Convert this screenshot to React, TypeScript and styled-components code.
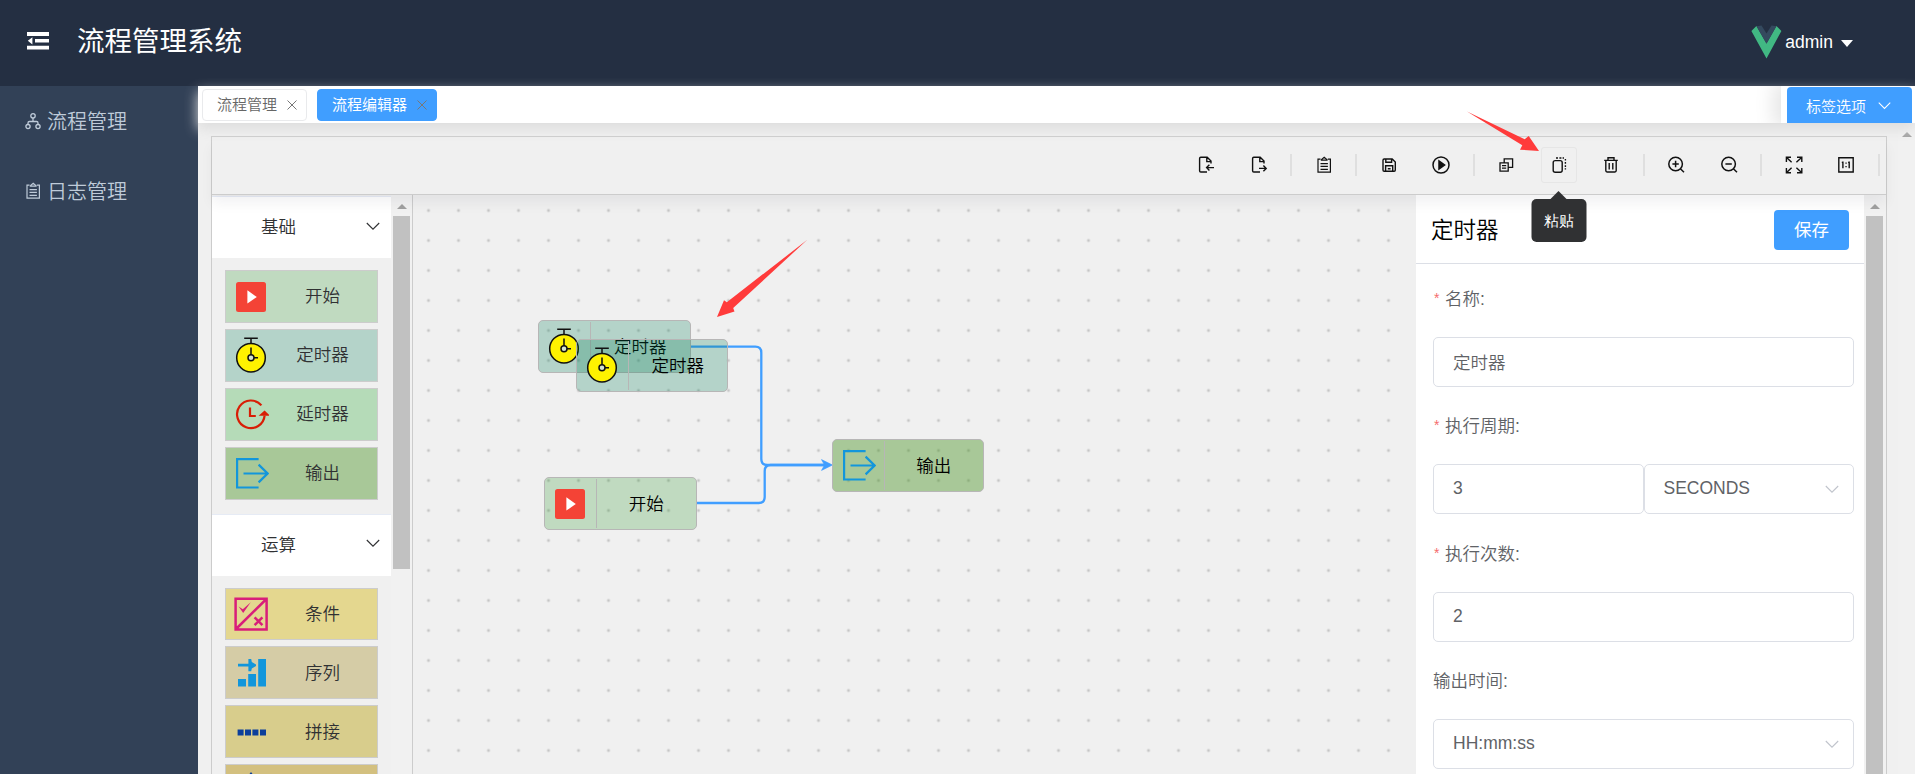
import React from "react";
import styled, { createGlobalStyle } from "styled-components";

const GlobalStyle = createGlobalStyle`
  *, *::before, *::after { box-sizing: border-box; }
  body {
    margin: 0;
    overflow: hidden;
    background: #f0f0f0;
    font-family: "Liberation Sans", "Noto Sans CJK SC", sans-serif;
    font-size: 17.5px;
    font-weight: 350;
  }
`;

const Page = styled.div`
  height: 774px;
  display: flex;
  flex-direction: column;
  overflow: hidden;
`;

/* ---------- header ---------- */
const Header = styled.header`
  flex: none;
  height: 86px;
  display: flex;
  align-items: center;
  background: #242f42;
  color: #fff;
  padding: 0 62px 2px 26px;
`;

const MenuToggle = styled.svg`
  width: 24px;
  height: 20px;
  margin: 0 27px 2px 0;
`;

const SystemTitle = styled.h1`
  margin: 0;
  flex: 1;
  font-size: 27.5px;
  line-height: 40px;
  font-weight: 400;
`;

const UserMenu = styled.div`
  display: flex;
  align-items: center;
  font-weight: 400;
  line-height: 24px;
`;

const Logo = styled.svg`
  width: 31px;
  height: 34px;
  margin-right: 3px;
`;

const Caret = styled.i`
  margin: 2px 0 0 8px;
  border: 6px solid transparent;
  border-top: 7px solid #fff;
  border-bottom: 0;
`;

/* ---------- frame ---------- */
const Body = styled.div`
  flex: 1;
  min-height: 0;
  display: flex;
`;

const SideNav = styled.nav`
  width: 198px;
  flex: none;
  background: #324157;
`;

const NavItem = styled.a`
  height: 70px;
  display: flex;
  align-items: center;
  padding: 0 0 2px 23px;
  gap: 4px;
  color: #bfcbd9;
  font-size: 20px;

  svg { width: 20px; height: 20px; margin-top: 2px; }
`;

const Main = styled.main`
  flex: 1;
  min-width: 0;
  display: flex;
  flex-direction: column;
  background: #f0f0f0;
`;

const TagsBar = styled.div`
  position: relative;
  z-index: 1;
  flex: none;
  height: 37px;
  display: flex;
  align-items: center;
  background: #fff;
  padding-left: 4px;
  box-shadow: 0 6px 12.5px #ddd;
`;

const Tag = styled.div<{ $active?: boolean }>`
  height: 32px;
  margin-right: 10px;
  padding: 0 8px 0 14px;
  display: flex;
  align-items: center;
  gap: 9px;
  border: 1px solid ${(p) => (p.$active ? "#409eff" : "#e9eaec")};
  border-radius: 4px;
  background: ${(p) => (p.$active ? "#409eff" : "#fff")};
  color: ${(p) => (p.$active ? "#fff" : "#666")};
  font-size: 15px;
  font-weight: ${(p) => (p.$active ? 400 : 350)};
  line-height: 30px;

  svg { width: 12px; height: 12px; }
`;

const TagOptions = styled.div`
  height: 37px;
  margin-left: auto;
  padding: 1px 3px 0 6px;
  background: #fff;
  box-shadow: -4px 0 19px 4px rgba(0, 0, 0, 0.1);
  clip-path: inset(0 0 0 -30px);
`;

const TagOptionsButton = styled.button`
  width: 125px;
  height: 36px;
  border: 0;
  border-radius: 4px 4px 0 0;
  background: #409eff;
  color: #fff;
  font: inherit;
  font-size: 15px;
  display: flex;
  align-items: center;
  gap: 12px;
  padding: 1px 0 0 19px;
`;

const Scroller = styled.div`
  flex: 1;
  min-height: 0;
  display: flex;
  justify-content: space-between;
  padding-left: 13px;
`;

const Workbench = styled.section`
  width: 1676px;
  margin-top: 13px;
  display: flex;
  flex-direction: column;
  border: 1px solid #ccc;
  border-bottom: 0;
`;

/* ---------- toolbar ---------- */
const Toolbar = styled.div`
  position: relative;
  z-index: 2;
  flex: none;
  height: 58px;
  display: flex;
  align-items: center;
  justify-content: flex-end;
  padding: 0 1px 1px 0;
  border-bottom: 1px solid #ccc;
  box-shadow: 0 9px 12px rgba(0, 21, 41, 0.05);
`;

const ToolButton = styled.button<{ $hover?: boolean }>`
  position: relative;
  width: 36.5px;
  height: 36.5px;
  margin: 0 8px;
  padding: 0;
  display: grid;
  place-items: center;
  background: none;
  border: 1px solid ${(p) => (p.$hover ? "#e6e6e6" : "transparent")};
  border-radius: 3px;

  svg { width: 20px; height: 20px; }
`;

const Separator = styled.i`
  width: 2px;
  height: 22px;
  margin: 0 5.25px;
  background: #dfdfdf;
`;

const Tooltip = styled.span`
  position: absolute;
  top: 51px;
  left: 50%;
  width: 55px;
  height: 43px;
  transform: translateX(-50%);
  border-radius: 5px;
  background: #303133;
  color: #fff;
  font-size: 15px;
  font-weight: 400;
  line-height: 43px;
  text-align: center;

  &::before {
    content: "";
    position: absolute;
    top: -8px;
    left: 19.5px;
    border: 8px solid transparent;
    border-top: 0;
    border-bottom-color: #303133;
  }
`;

/* ---------- palette ---------- */
const Columns = styled.div`
  flex: 1;
  min-height: 0;
  display: flex;
`;

const PaletteColumn = styled.aside`
  width: 201px;
  flex: none;
  display: flex;
  border-right: 1px solid #ccc;
  overflow: hidden;
`;

const PaletteGroups = styled.div`
  width: 179px;
  flex: none;
  padding-top: 1px;
`;

const GroupHead = styled.div`
  height: 62px;
  display: flex;
  align-items: center;
  justify-content: space-between;
  padding: 0 11px 4px 49px;
  border-top: 1px solid #e6ebf5;
  background: #fff;
  color: #303133;
`;

const GroupBody = styled.div`
  padding: 12px 13px 14px;
  display: flex;
  flex-direction: column;
  gap: 6px;
`;

const Card = styled.div<{ $fill: string }>`
  width: 153px;
  height: 52.9px;
  display: flex;
  align-items: center;
  border: 1px solid #ccc;
  background: ${(p) => p.$fill};
  color: #303133;
`;

const IconCell = styled.span`
  width: 42px;
  flex: none;
  padding-left: 7px;
  display: flex;

  svg { width: 36px; height: 40px; flex: none; }
`;

const CardLabel = styled.span`
  flex: 1;
  text-align: center;
  line-height: 26px;
`;

/* ---------- scrollbars ---------- */
const ScrollTrack = styled.div<{ $inset?: number }>`
  width: ${(p) => 21 + (p.$inset ?? 0)}px;
  padding-right: ${(p) => p.$inset ?? 0}px;
  flex: none;
  background: #f1f1f1;
  display: flex;
  flex-direction: column;
  align-items: center;
`;

const ScrollArrow = styled.i`
  flex: none;
  margin: 9px 0 7px;
  border: 5px solid transparent;
  border-top: 0;
  border-bottom-color: #a0a0a0;
`;

const ScrollThumb = styled.i<{ $height: string }>`
  width: 17px;
  height: ${(p) => p.$height};
  background: #c1c1c1;
`;

/* ---------- canvas ---------- */
const Canvas = styled.div`
  position: relative;
  flex: 1;
  overflow: hidden;
  background: radial-gradient(circle, #c6c6c6 1px, transparent 1.9px) 0.5px 0.5px / 30px 30px;
`;

const Edges = styled.svg`
  position: absolute;
  inset: 0;
  width: 1003px;
  height: 579px;
`;

const Node = styled.div<{ $x: number; $y: number; $w: number; $fill: string }>`
  position: absolute;
  left: ${(p) => p.$x}px;
  top: ${(p) => p.$y}px;
  width: ${(p) => p.$w}px;
  height: 52.5px;
  display: flex;
  align-items: center;
  border: 1px solid #b7b6b6;
  border-radius: 5px;
  background: ${(p) => p.$fill};
  color: #000;
`;

const NodeIcon = styled.span`
  width: 52px;
  height: 49px;
  flex: none;
  padding-left: 7px;
  display: flex;
  align-items: center;
  border-right: 1px solid #b7b6b6;

  svg { width: 36px; height: 40px; }
`;

const NodeLabel = styled(CardLabel)`
  padding-top: 2px;
`;

/* ---------- property panel ---------- */
const Properties = styled.aside`
  width: 448px;
  flex: none;
  background: #fff;
`;

const PropHead = styled.div`
  height: 69px;
  display: flex;
  align-items: center;
  justify-content: space-between;
  padding: 1px 15px 0 15px;
  border-bottom: 1px solid #dcdfe6;
`;

const PropTitle = styled.h2`
  margin: -3px 0 0;
  font-size: 22.5px;
  font-weight: 350;
  color: #000;
`;

const SaveButton = styled.button`
  width: 75px;
  height: 40px;
  border: 0;
  border-radius: 4px;
  background: #409eff;
  color: #fff;
  font: inherit;
  font-weight: 400;
  padding: 0 0 2px;
`;

const Form = styled.div`
  padding: 10px 10px 0 17px;
`;

const Field = styled.div`
  height: 127.4px;
`;

const FieldLabel = styled.div<{ $required?: boolean }>`
  height: 50px;
  line-height: 50px;
  margin-bottom: 13px;
  color: #606266;

  &::before {
    content: ${(p) => (p.$required ? '"*"' : "none")};
    display: inline-block;
    width: 12px;
    padding-left: 1px;
    font-size: 14px;
    line-height: 20px;
    vertical-align: 2px;
    color: #f56c6c;
  }
`;

const FieldRow = styled.div`
  display: flex;
`;

const InputBox = styled.div`
  flex: 1 1 0;
  height: 50px;
  display: flex;
  align-items: center;
  justify-content: space-between;
  padding: 0 14px 1px 19px;
  border: 1px solid #dcdfe6;
  border-radius: 5px;
  color: #606266;
`;

const Annotations = styled.svg`
  position: absolute;
  left: 0;
  top: 0;
  width: 1915px;
  height: 774px;
  z-index: 5;
  pointer-events: none;
`;

/* ---------- icons ---------- */
const Chevron = ({ color, size = 14 }: { color: string; size?: number }) => (
  <svg width={size} height={size} viewBox="0 0 14 14" fill="none" stroke={color} strokeWidth="1.1">
    <path d="M.8 4 7 10.2 13.2 4" />
  </svg>
);

const Cross = () => (
  <svg viewBox="0 0 12 12" fill="none" stroke="#777" strokeWidth="1">
    <path d="M1.5 1.5l9 9M10.5 1.5l-9 9" />
  </svg>
);

const Line = ({ children, w = 1.4, color = "#111" }: { children: React.ReactNode; w?: number; color?: string }) => (
  <svg viewBox="0 0 20 20" fill="none" stroke={color} strokeWidth={w}>
    {children}
  </svg>
);

const FlowIcon = () => (
  <Line color="#bfcbd9" w={1.3}>
    <circle cx="10" cy="4.8" r="2.2" />
    <circle cx="5" cy="15.6" r="2.1" />
    <circle cx="15" cy="15.6" r="2.1" />
    <path d="M10 7v3.5M5 13.5v-1.6q0-1.4 1.4-1.4h7.2q1.4 0 1.4 1.4v1.6" />
  </Line>
);

const ClipboardIcon = ({ color = "#111" }: { color?: string }) => (
  <Line color={color} w={1.2}>
    <path d="M6.5 4.2H4v13h12.4v-13h-2.6M6.8 5.2h6.8M7.4 4.6 10.2 2.2 13 4.6M6.5 8.6h7.4M6.5 11.4h7.4M6.5 14.3h7.4" />
  </Line>
);

const docOutline = "M11 17H4.8Q3.6 17 3.6 15.8V3.5Q3.6 2.3 4.8 2.3H11.2L15 6.1V8.5M10.8 2.5V6.6H15";

const tools: Record<string, React.ReactNode> = {
  import: <Line><path d={`${docOutline}M18 12.6H10.8M13.4 9.8 10.6 12.6l2.8 2.8`} /></Line>,
  export: <Line><path d={`${docOutline}M10 13.4H17M14.4 10.6 17.2 13.4l-2.8 2.8`} /></Line>,
  log: <ClipboardIcon />,
  save: (
    <Line>
      <path d="M4 5.2Q4 4 5.2 4H13.2L16.3 7V15Q16.3 16.2 15.1 16.2H5.2Q4 16.2 4 15ZM6.8 4V7.2H12.6V4M6.6 16V10.8H13.7V16M8.8 13.8H11.6" />
    </Line>
  ),
  run: (
    <Line w={1.5}>
      <circle cx="10" cy="10" r="8" />
      <path d="M8 6v8l5.6-4z" fill="#111" />
    </Line>
  ),
  copy: (
    <Line w={1.3}>
      <path d="M4 7.8H12.2V16.2H4ZM8.2 7.6V3.8H16.6V12.4H12.4M6 10.6H10.2M6 13.2H10.2" />
    </Line>
  ),
  paste: (
    <Line>
      <rect x="4.2" y="5.6" width="9" height="11.6" rx="2" />
      <path d="M7 3h2M10.4 3h2M13.6 3h1.4M16.4 4v1.6M16.4 7v1.8M16.4 10.2V12M16.4 13.2v1.4" />
    </Line>
  ),
  remove: (
    <Line>
      <path d="M3.2 5.4H16.8M7 5V2.8H13V5M4.8 5.6V15.6Q4.8 17 6 17H14Q15.2 17 15.2 15.6V5.6M8.2 8V14.4M11.8 8V14.4" />
    </Line>
  ),
  zoomIn: (
    <Line w={1.5}>
      <circle cx="9.6" cy="9" r="6.8" />
      <path d="M14.4 13.8 18 17.2M9.6 5.8v6.4M6.4 9h6.4" />
    </Line>
  ),
  zoomOut: (
    <Line w={1.5}>
      <circle cx="9.6" cy="9" r="6.8" />
      <path d="M14.4 13.8 18 17.2M6.4 9h6.4" />
    </Line>
  ),
  fit: (
    <Line>
      <path d="M2.4 7V2.2H7M2.6 2.4 7.6 7.2M13 2.2H17.8V7M17.6 2.4 12.4 7.2M2.4 13V17.8H7M2.6 17.6 7.6 12.8M13 17.8H17.8V13M17.6 17.6 12.4 12.8" />
    </Line>
  ),
  actual: (
    <Line>
      <path d="M2.8 2.8H17.2V17H2.8ZM6.9 6.6V13.2M13.2 6.6V13.2M5.8 7.4H7M12.1 7.4H13.2" />
      <path d="M9.4 8.1h1.3M9.4 11.6h1.3" />
    </Line>
  ),
};

const shapes: Record<string, React.ReactNode> = {
  start: (
    <svg viewBox="0 0 36 40">
      <rect x="3" y="6" width="30" height="30" rx="2.5" fill="#f44336" />
      <path d="M14.4 14.2V27.6L23.8 21z" fill="#fff" />
    </svg>
  ),
  timer: (
    <svg viewBox="0 0 36 40" fill="none" stroke="#111" strokeWidth="1.5">
      <path d="M11.2 3.3H24.8M18 3.5V8" />
      <circle cx="18" cy="22.7" r="14.3" fill="#fff200" />
      <path d="M18 12.5V20M21 22.7H25" />
      <circle cx="18" cy="22.7" r="3" fill="#d5e3d0" />
    </svg>
  ),
  delay: (
    <svg viewBox="0 0 36 40" fill="none" stroke="#d81e06" strokeWidth="2.2">
      <path d="M28.4 11.4A13.8 13.8 0 1 0 31.6 21.6" />
      <path d="M17 13.4V22H22.8" />
      <path d="M25.6 21.8 31.6 16.6 37 21.8z" fill="#d81e06" stroke="none" />
    </svg>
  ),
  output: (
    <svg viewBox="0 0 36 40" fill="none" stroke="#1296db" strokeWidth="2.2">
      <path d="M25.6 6.1H4.1V34.5H25.6M10.5 20.5H34.4M25.6 11.6 34.6 20.5 25.6 29.4" />
    </svg>
  ),
  condition: (
    <svg viewBox="0 0 36 40" fill="none" stroke="#d81e7a" strokeWidth="2.5">
      <path d="M2.6 4.8H33.6V35.4H2.6ZM3 35 33.4 5M21.6 23.4 29.4 31.2M29.4 23.4 21.6 31.2" />
      <path d="M5.6 12.6 9.8 15.2 17.8 8.2 10.2 19z" fill="#d81e7a" stroke="none" />
    </svg>
  ),
  sequence: (
    <svg viewBox="0 0 36 40" fill="#1296db">
      <path d="M5 26h8v7.6H5zM15.2 21h7.8v12.6h-7.8zM25.2 6h7.8v27.6h-7.8zM5 10.8h10.4V6l2.8 0 .6 3 4.2 2.6v1.4l-4.2 2.6-.6 2.6h-2.8v-4.6H5z" />
    </svg>
  ),
  concat: (
    <svg viewBox="0 0 36 40" fill="#0b3f9b">
      <path d="M4.6 17.4h6v6h-6zM12 17.4h6v6h-6zM19.4 17.4h6v6h-6zM27 17.4h6v6h-6z" />
    </svg>
  ),
  split: (
    <svg viewBox="0 0 36 40" fill="#0b3f9b">
      <path d="M18 1 21 5v28h-6V5z" />
    </svg>
  ),
};

type Item = { kind: string; label: string; fill: string };

const basics: Item[] = [
  { kind: "start", label: "开始", fill: "#c0dac0" },
  { kind: "timer", label: "定时器", fill: "#b4d3c9" },
  { kind: "delay", label: "延时器", fill: "#b5dbb8" },
  { kind: "output", label: "输出", fill: "#a8c898" },
];

const operations: Item[] = [
  { kind: "condition", label: "条件", fill: "#e4d78f" },
  { kind: "sequence", label: "序列", fill: "#d5cca6" },
  { kind: "concat", label: "拼接", fill: "#d8cd8c" },
  { kind: "split", label: "", fill: "#d3c07f" },
];

const toolOrder = [
  "import", "export", "|", "log", "|", "save", "run", "|", "copy", "paste",
  "remove", "|", "zoomIn", "zoomOut", "|", "fit", "actual", "|",
];

const nodes = [
  { kind: "timer", label: "定时器", x: 125, y: 125, w: 152.5, fill: "rgba(0,124,84,.25)" },
  { kind: "start", label: "开始", x: 131, y: 282, w: 152.5, fill: "rgba(0,128,0,.2)" },
  { kind: "output", label: "输出", x: 419, y: 244, w: 151.5, fill: "rgba(60,140,20,.4)" },
  { kind: "timer", label: "定时器", x: 163, y: 144, w: 151.5, fill: "rgba(0,124,84,.25)" },
];

function PaletteGroup({ title, items }: { title: string; items: Item[] }) {
  return (
    <>
      <GroupHead>
        {title}
        <Chevron color="#303133" />
      </GroupHead>
      <GroupBody>
        {items.map((item) => (
          <Card key={item.kind} $fill={item.fill}>
            <IconCell>{shapes[item.kind]}</IconCell>
            <CardLabel>{item.label}</CardLabel>
          </Card>
        ))}
      </GroupBody>
    </>
  );
}

export default function App() {
  return (
    <Page>
      <GlobalStyle />
      <Header>
        <MenuToggle viewBox="0 0 24 20" fill="#fff">
          <path d="M1 1h22v4H1zM9 8h14v3.6H9zM1 14.8h22v3.8H1zM1.8 9.8 6.4 6.2v7.2z" />
        </MenuToggle>
        <SystemTitle>流程管理系统</SystemTitle>
        <UserMenu>
          <Logo viewBox="0 0 31 34">
            <path d="M.4 6 5.4 1 15.5 18.6 25.4 1l5 5L15.5 33.5z" fill="#41b883" />
            <path d="M5.6 1.2 10.5.4l5 8.2 5-8.2 4.9.8-9.9 17.6z" fill="#34495e" />
          </Logo>
          admin
          <Caret />
        </UserMenu>
      </Header>
      <Body>
        <SideNav>
          <NavItem><FlowIcon />流程管理</NavItem>
          <NavItem><ClipboardIcon color="#bfcbd9" />日志管理</NavItem>
        </SideNav>
        <Main>
          <TagsBar>
            <Tag>流程管理<Cross /></Tag>
            <Tag $active>流程编辑器<Cross /></Tag>
            <TagOptions>
              <TagOptionsButton>
                标签选项
                <Chevron color="#fff" size={13} />
              </TagOptionsButton>
            </TagOptions>
          </TagsBar>
          <Scroller>
            <Workbench>
              <Toolbar>
                {toolOrder.map((name, i) =>
                  name === "|" ? (
                    <Separator key={i} />
                  ) : (
                    <ToolButton key={name} $hover={name === "paste"}>
                      {tools[name]}
                      {name === "paste" && <Tooltip>粘贴</Tooltip>}
                    </ToolButton>
                  )
                )}
              </Toolbar>
              <Columns>
                <PaletteColumn>
                  <PaletteGroups>
                    <PaletteGroup title="基础" items={basics} />
                    <PaletteGroup title="运算" items={operations} />
                  </PaletteGroups>
                  <ScrollTrack>
                    <ScrollArrow />
                    <ScrollThumb $height="353px" />
                  </ScrollTrack>
                </PaletteColumn>
                <Canvas>
                  <Edges viewBox="0 0 1003 579" fill="none" stroke="#409eff" strokeWidth="2.3">
                    <path d="M278 151.7H342.3Q348.3 151.7 348.3 157.7V264Q348.3 270 354.3 270H412" />
                    <path d="M284 308H345.7Q351.7 308 351.7 302V276Q351.7 270 357.7 270H412" />
                    <path d="M408.5 264.6 419.5 270 408.5 275.4 411.5 270z" fill="#409eff" stroke="#409eff" strokeWidth=".6" />
                  </Edges>
                  {nodes.map((n) => (
                    <Node key={`${n.kind}-${n.x}`} $x={n.x} $y={n.y} $w={n.w} $fill={n.fill}>
                      <NodeIcon>{shapes[n.kind]}</NodeIcon>
                      <NodeLabel>{n.label}</NodeLabel>
                    </Node>
                  ))}
                </Canvas>
                <Properties>
                  <PropHead>
                    <PropTitle>定时器</PropTitle>
                    <SaveButton>保存</SaveButton>
                  </PropHead>
                  <Form>
                    <Field>
                      <FieldLabel $required>名称:</FieldLabel>
                      <InputBox>定时器</InputBox>
                    </Field>
                    <Field>
                      <FieldLabel $required>执行周期:</FieldLabel>
                      <FieldRow>
                        <InputBox>3</InputBox>
                        <InputBox>SECONDS<Chevron color="#c0c4cc" /></InputBox>
                      </FieldRow>
                    </Field>
                    <Field>
                      <FieldLabel $required>执行次数:</FieldLabel>
                      <InputBox>2</InputBox>
                    </Field>
                    <Field>
                      <FieldLabel>输出时间:</FieldLabel>
                      <InputBox>HH:mm:ss<Chevron color="#c0c4cc" /></InputBox>
                    </Field>
                  </Form>
                </Properties>
                <ScrollTrack $inset={1}>
                  <ScrollArrow />
                  <ScrollThumb $height="600px" />
                </ScrollTrack>
              </Columns>
            </Workbench>
            <ScrollTrack $inset={-4}>
              <ScrollArrow />
            </ScrollTrack>
          </Scroller>
        </Main>
      </Body>
      <Annotations viewBox="0 0 1915 774" fill="#ff3b3b">
        <path d="M807.3 239.8 733.2 308 734.5 311.4 717 317 724 300.3 726.8 302.2z" />
        <path d="M1467 111.6 1524.7 139.2 1528.7 136 1539 151 1520 149.7 1522.3 145.3z" />
      </Annotations>
    </Page>
  );
}
